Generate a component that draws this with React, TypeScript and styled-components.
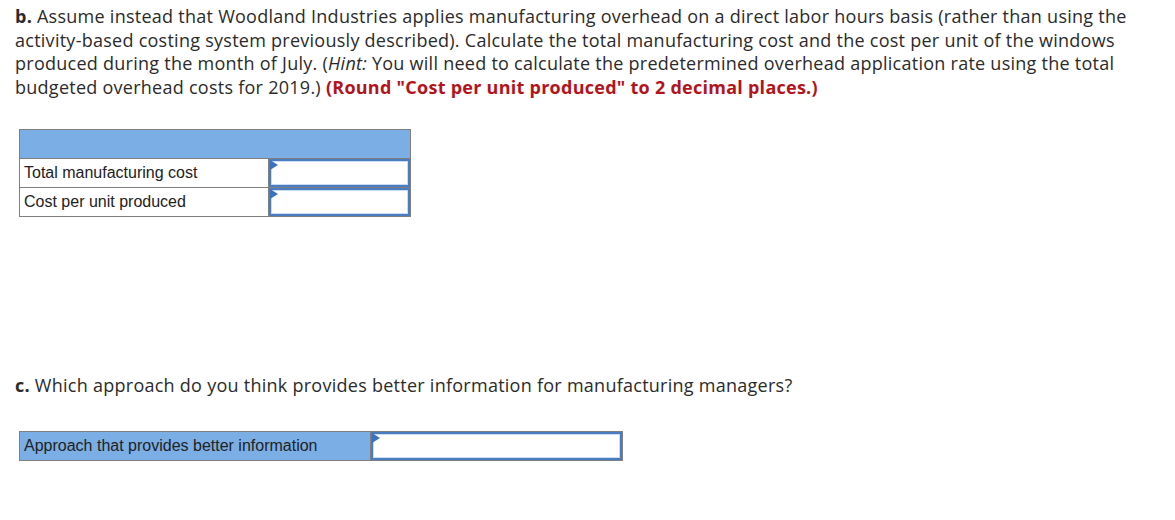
import React from "react";
import styled, {createGlobalStyle} from "styled-components";

const GlobalStyle = createGlobalStyle`
  body {
    margin: 0;
    background: #ffffff;
  }
`;

const Page = styled.div`
  padding: 5px 15px 0 15px;
  font-family: "Open Sans", "Liberation Sans", sans-serif;
  color: #2b2b2b;
`;

const Question = styled.p<{ $top?: number }>`
  margin: ${p => p.$top || 0}px 0 0 0;
  font-size: 18px;
  letter-spacing: 0.26px;
  line-height: 23.5px;
  white-space: nowrap;
`;

const Letter = styled.b`
  font-weight: 700;
`;

const Warn = styled.b`
  color: #b3141c;
  font-weight: 700;
`;

const Grid = styled.table<{ $width: number; $top: number }>`
  margin: ${p => p.$top}px 0 0 4px;
  width: ${p => p.$width}px;
  border-collapse: collapse;
  border: 1px solid #7f7f7f;
  font-family: "Liberation Sans", Arial, sans-serif;
  font-size: 16px;
  color: #222;
`;

const HeadCell = styled.td`
  height: 28px;
  background: #7aaee5;
  border: 1px solid #7f7f7f;
  padding: 0;
`;

const LabelCell = styled.td<{ $blue?: boolean; $width: number }>`
  width: ${p => p.$width}px;
  height: 28px;
  padding: 0 0 0 4px;
  border: 1px solid #7f7f7f;
  background: ${p => (p.$blue ? "#7aaee5" : "#fff")};
  text-align: left;
  vertical-align: middle;
  box-sizing: border-box;
`;

const InputCell = styled.td`
  padding: 0;
  border: 1px solid #7f7f7f;
  height: 28px;
  position: relative;
`;

const InputBox = styled.div`
  position: absolute;
  inset: 0;
  border: 2px solid #4a7cc1;
  box-shadow: inset 0 0 0 1px #c9dcf3;
  background: #fff;
`;

const Marker = styled.span`
  position: absolute;
  top: 1px;
  left: 1px;
  display: block;
  width: 0;
  height: 0;
  border-top: 5px solid transparent;
  border-bottom: 5px solid transparent;
  border-left: 8px solid #3b72c0;
  z-index: 2;
`;

function Field() {
    return (
        <InputCell>
            <InputBox/>
            <Marker/>
        </InputCell>
    );
}

export default function App() {
    return (
        <>
            <GlobalStyle/>
            <Page>
                <Question>
                    <Letter>b.</Letter> Assume instead that Woodland Industries applies manufacturing overhead on a direct labor hours basis (rather than using the<br/>
                    activity-based costing system previously described). Calculate the total manufacturing cost and the cost per unit of the windows<br/>
                    produced during the month of July. (<i>Hint:</i> You will need to calculate the predetermined overhead application rate using the total<br/>
                    budgeted overhead costs for 2019.) <Warn>(Round "Cost per unit produced" to 2 decimal places.)</Warn>
                </Question>

                <Grid $width={392} $top={30}>
                    <tbody>
                    <tr>
                        <HeadCell colSpan={2}/>
                    </tr>
                    <tr>
                        <LabelCell $width={249}>Total manufacturing cost</LabelCell>
                        <Field/>
                    </tr>
                    <tr>
                        <LabelCell $width={249}>Cost per unit produced</LabelCell>
                        <Field/>
                    </tr>
                    </tbody>
                </Grid>

                <Question $top={157}>
                    <Letter>c.</Letter> Which approach do you think provides better information for manufacturing managers?
                </Question>

                <Grid $width={604} $top={33}>
                    <tbody>
                    <tr>
                        <LabelCell $blue $width={351}>Approach that provides better information</LabelCell>
                        <Field/>
                    </tr>
                    </tbody>
                </Grid>
            </Page>
        </>
    );
}
